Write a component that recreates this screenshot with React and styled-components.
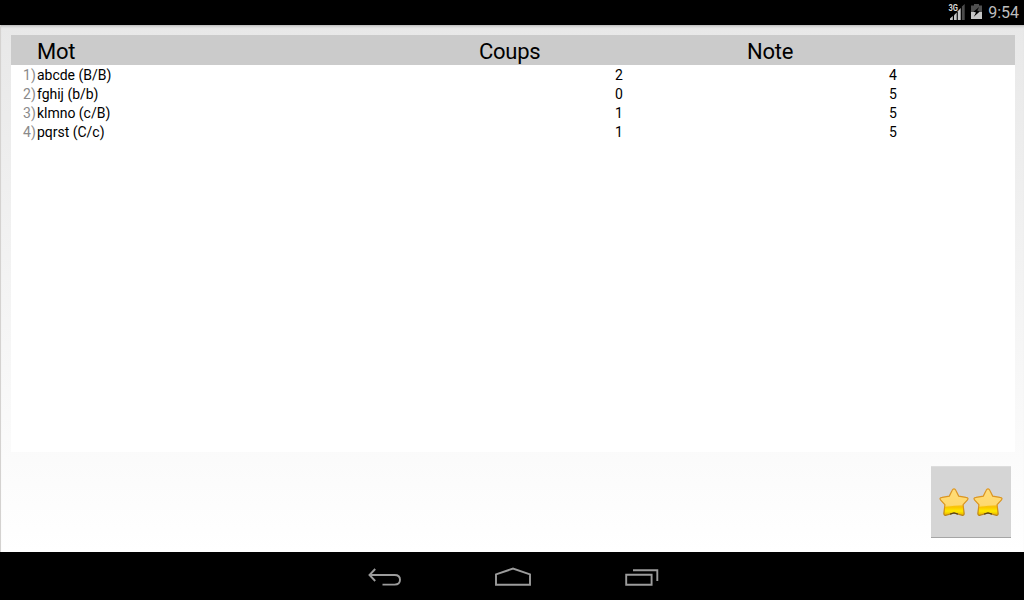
import React from 'react';
import styled, { createGlobalStyle } from 'styled-components';

const GlobalStyle = createGlobalStyle`
  * {
    box-sizing: border-box;
  }

  body {
    margin: 0;
    background: #000;
    font-family: Roboto, "Liberation Sans", sans-serif;
  }
`;

const words = [
  { id: 1, word: 'abcde (B/B)', moves: 2, grade: 4 },
  { id: 2, word: 'fghij (b/b)', moves: 0, grade: 5 },
  { id: 3, word: 'klmno (c/B)', moves: 1, grade: 5 },
  { id: 4, word: 'pqrst (C/c)', moves: 1, grade: 5 },
];

function SignalIcon() {
  return (
    <svg width="17" height="18" viewBox="0 0 17 18">
      <g fill="#c8c8c8">
        <path d="M2 17v-1.4L4.8 13v4z" />
        <path d="M6 17v-4.8l2.7-2.7V17z" />
        <path d="M9.8 17V8.3L12.7 5v12z" />
      </g>
      <path d="M13.9 17V3.6L16.7 1v16z" fill="#4c4c4c" />
      <text x="0.4" y="8" fill="#d8d8d8" fontSize="8.5" fontWeight="700" textLength="9.5" lengthAdjust="spacingAndGlyphs">3G</text>
    </svg>
  );
}

function BatteryIcon() {
  return (
    <svg width="11" height="16" viewBox="0 0 11 16">
      <path d="M3 0h5v1.5h3V8H0V1.5h3z" fill="#4f4f4f" />
      <path d="M0 8h11v7H0z" fill="#c6c6c6" />
      <path d="M8.2 3L2.4 7.8l2.6.8-2.2 4.2 6-5.4-2.6-.8z" fill="#000" />
    </svg>
  );
}

function Star({ id }) {
  const outline =
    'M15 1.8c.8 0 1.4.6 1.8 1.5l2.9 5.8 7.2 1.2c2.2.3 2.6 1.5 1.4 2.8l-4.2 4.6 1 8.4c.2 1.9-.7 2.6-2.4 2L15 26l-7.7 2.1c-1.7.6-2.6-.1-2.4-2l1-8.4-4.2-4.6c-1.2-1.3-.8-2.5 1.4-2.8l7.2-1.2 2.9-5.8c.4-.9 1-1.5 1.8-1.5z';
  return (
    <svg width="30" height="30" viewBox="0 0 30 30">
      <defs>
        <linearGradient id={`fill${id}`} x1="0" y1="0" x2="0" y2="1">
          <stop offset="0" stopColor="#ffd04f" />
          <stop offset="0.6" stopColor="#fdc840" />
          <stop offset="0.68" stopColor="#f9c200" />
          <stop offset="0.84" stopColor="#ffea00" />
          <stop offset="1" stopColor="#e8b000" />
        </linearGradient>
        <linearGradient id={`edge${id}`} x1="0" y1="0" x2="0" y2="1">
          <stop offset="0" stopColor="#dd9828" />
          <stop offset="0.7" stopColor="#d8921c" />
          <stop offset="1" stopColor="#b98314" />
        </linearGradient>
        <clipPath id={`clip${id}`}>
          <path d={outline} />
        </clipPath>
      </defs>
      <path d={outline} fill={`url(#fill${id})`} />
      <path d="M0 0h30v18Q22 18 15 18.8T5 20L0 18z" fill="#ffe9a0" opacity="0.5" clipPath={`url(#clip${id})`} />
      <path d={outline} fill="none" stroke={`url(#edge${id})`} strokeWidth="1.2" />
      <path d="M11 27.1L15 25.9l4 1.2" fill="none" stroke="#584517" strokeWidth="1.1" />
    </svg>
  );
}

function App() {
  return (
    <Screen>
      <GlobalStyle />
      <StatusBar>
        <SignalIcon />
        <BatteryIcon />
        <Clock>9:54</Clock>
      </StatusBar>

      <Content>
        <Table>
          <HeaderRow>
            <span />
            <span>Mot</span>
            <span>Coups</span>
            <span>Note</span>
          </HeaderRow>
          {words.map((item) => (
            <Row key={item.id}>
              <Index>{item.id})</Index>
              <Word>{item.word}</Word>
              <Score $shift="136px">{item.moves}</Score>
              <Score $shift="142px">{item.grade}</Score>
            </Row>
          ))}
        </Table>
        <Footer>
          <StarButton>
            <Star id="a" />
            <Star id="b" />
          </StarButton>
        </Footer>
      </Content>

      <NavBar>
        <NavButton>
          <svg width="36" height="24" viewBox="0 0 36 24">
            <path d="M9.2 4L3.5 10l5.7 6M3.5 10h25.2c3.2 0 5.3 1.8 5.3 4.8s-2.1 4.8-5.3 4.8H16.5" />
          </svg>
        </NavButton>
        <NavButton>
          <svg width="36" height="24" viewBox="0 0 36 24">
            <path d="M1 19.7V9.4L18 3.6l17 5.8v10.3z" />
          </svg>
        </NavButton>
        <NavButton>
          <svg width="36" height="24" viewBox="0 0 36 24">
            <path d="M2.2 9.8h25.4v10H2.2zM9 5.2h24.3v10.8" />
          </svg>
        </NavButton>
      </NavBar>
    </Screen>
  );
}

const Screen = styled.div`
  width: 1024px;
  height: 600px;
  display: flex;
  flex-direction: column;
  overflow: hidden;
`;

const StatusBar = styled.div`
  height: 25px;
  padding: 3px 5px 0 0;
  display: flex;
  justify-content: flex-end;
  align-items: flex-start;
  background: #000;

  svg {
    display: block;
  }

  svg + svg {
    margin: 1px 6px 0 6px;
  }
`;

const Clock = styled.span`
  font-size: 16px;
  line-height: 19px;
  color: #bebebe;
`;

const Content = styled.main`
  flex: 1;
  display: flex;
  flex-direction: column;
  padding: 10px 9px 0 10px;
  border-left: 1px solid #d4d2d0;
  background: linear-gradient(#e8e8e8, #ffffff);
  box-shadow: inset 0 3px 3px -2px rgba(0, 0, 0, 0.25);
`;

const Table = styled.div`
  height: 417px;
  background: #fff;
`;

const HeaderRow = styled.div`
  display: grid;
  grid-template-columns: 26px 442px 268px 1fr;
  height: 30px;
  padding-top: 2px;
  background: #cbcbcb;
  color: #000;
  font-size: 22px;
  line-height: 30px;
  letter-spacing: -0.25px;
`;

const Row = styled.div`
  display: grid;
  grid-template-columns: 26px 442px 268px 1fr;
  height: 19px;
  font-size: 14px;
  line-height: 20px;
  color: #000;
`;

const Index = styled.span`
  padding-left: 12px;
  color: #8a8a8a;
`;

const Word = styled.span`
  letter-spacing: -0.02px;
`;

const Score = styled.span`
  padding-left: ${(props) => props.$shift};
`;

const Footer = styled.div`
  display: flex;
  justify-content: flex-end;
  padding: 14px 4px 0 0;
`;

const StarButton = styled.button`
  width: 80px;
  height: 72px;
  padding: 0;
  display: flex;
  justify-content: center;
  align-items: center;
  gap: 4px;
  border: 0;
  border-top: 1px solid #dddddd;
  border-bottom: 1px solid #a5a5a5;
  background: #d5d5d5;
`;

const NavBar = styled.nav`
  height: 48px;
  padding-left: 1px;
  display: flex;
  justify-content: center;
  align-items: center;
  gap: 93px;
  background: #000;
`;

const NavButton = styled.div`
  width: 36px;
  height: 24px;
  margin-top: 2px;

  svg {
    display: block;
    fill: none;
    stroke: #9c9c9c;
    stroke-width: 1.9;
  }
`;

export default App;
